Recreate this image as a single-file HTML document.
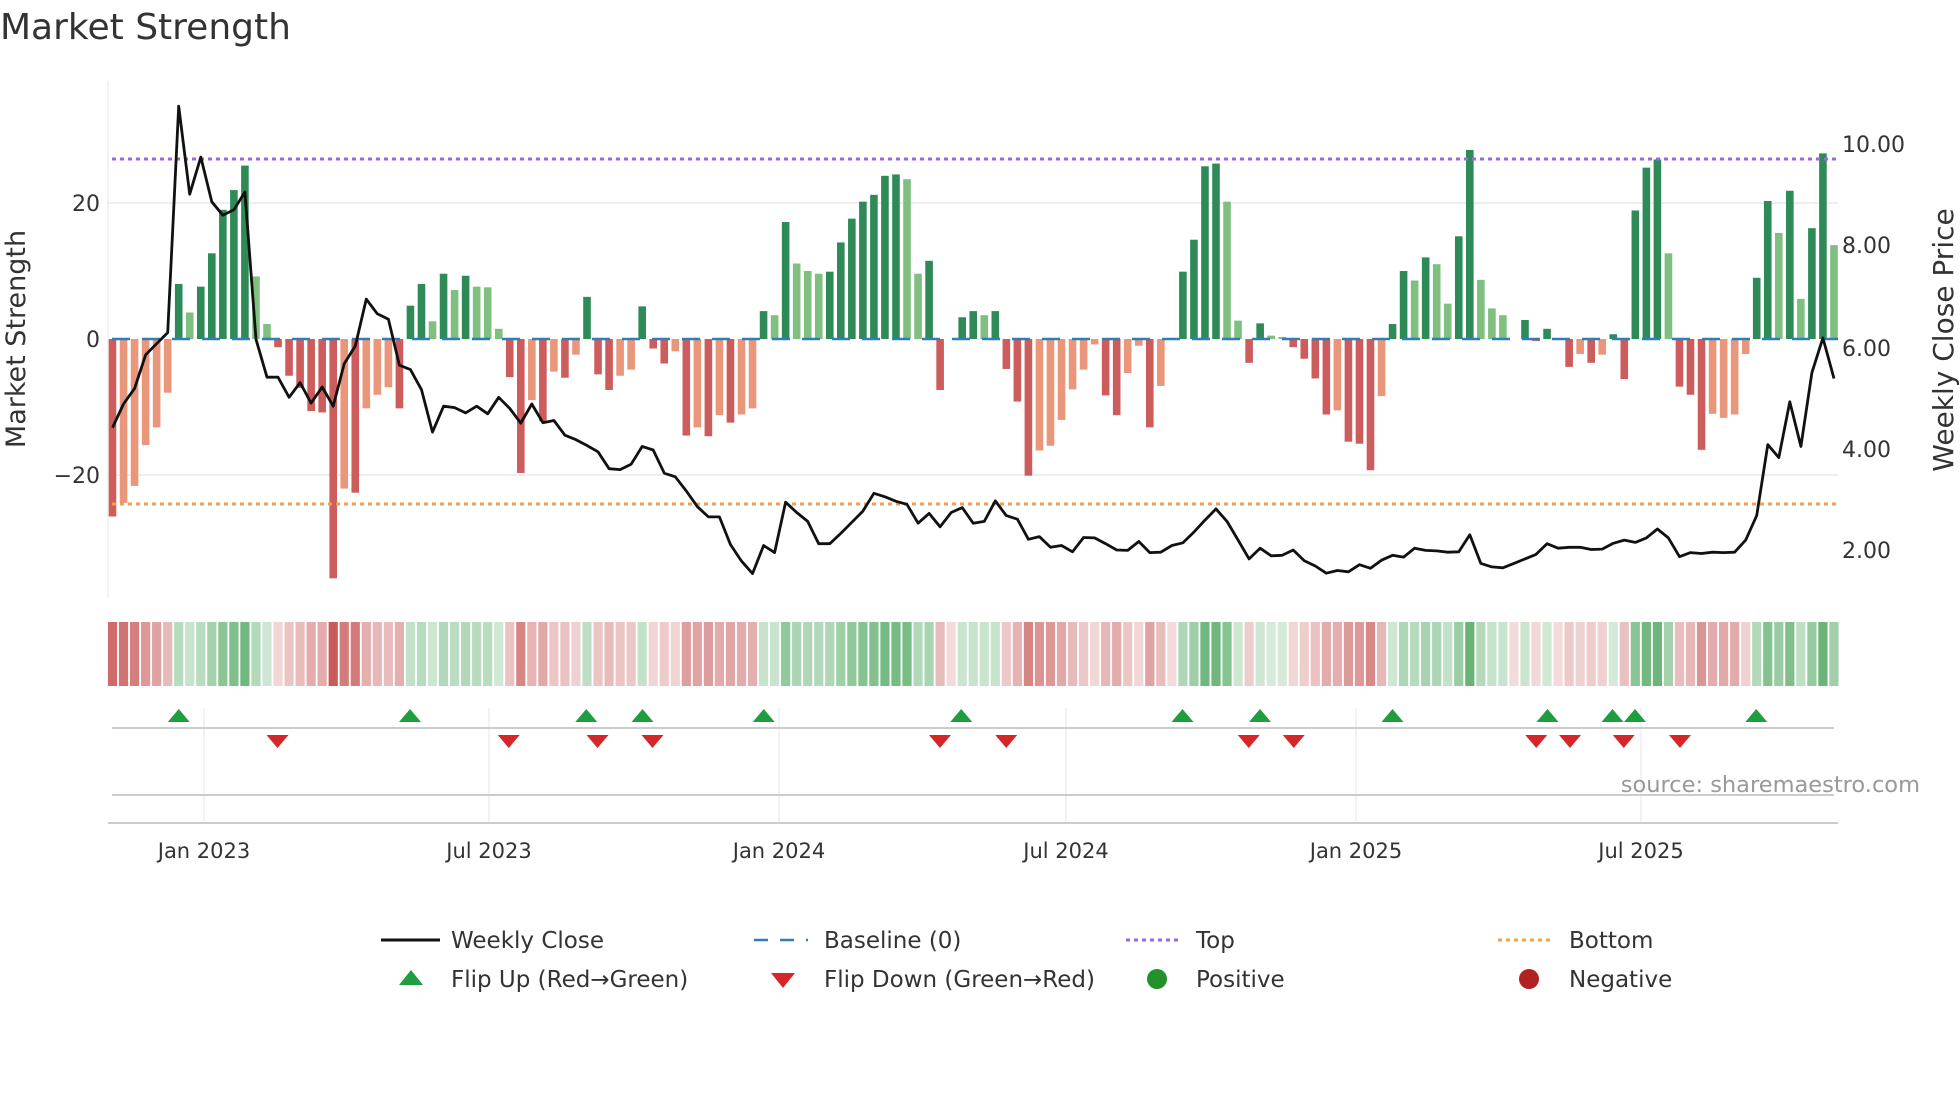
<!DOCTYPE html>
<html><head><meta charset="utf-8">
<style>
html,body{margin:0;padding:0;background:#fff;}
body{width:1960px;height:1102px;overflow:hidden;font-family:"DejaVu Sans","Liberation Sans",sans-serif;}
svg text{font-family:"DejaVu Sans","Liberation Sans",sans-serif;}
</style></head>
<body>
<svg id="s" width="1960" height="1102" viewBox="0 0 1960 1102" xmlns="http://www.w3.org/2000/svg">
<text x="0" y="39" font-size="36" fill="#333">Market Strength</text>
<line x1="108" y1="81" x2="108" y2="598" stroke="#eee" stroke-width="1.5"/>
<line x1="108" y1="203" x2="1838" y2="203" stroke="#eee" stroke-width="2"/>
<line x1="108" y1="475" x2="1838" y2="475" stroke="#eee" stroke-width="2"/>
<g id="bars"></g>
<line x1="112" y1="339" x2="1838" y2="339" stroke="#2c7fb8" stroke-width="2.5" stroke-dasharray="18,12"/>
<line x1="112" y1="159" x2="1838" y2="159" stroke="#a066e0" stroke-width="3" stroke-dasharray="4,4"/>
<line x1="112" y1="504" x2="1838" y2="504" stroke="#f0a050" stroke-width="3" stroke-dasharray="4,4"/>
<polyline id="price" fill="none" stroke="#111" stroke-width="2.8" stroke-linejoin="round"/>
<text x="100" y="211" font-size="22" fill="#333" text-anchor="end">20</text>
<text x="100" y="347" font-size="22" fill="#333" text-anchor="end">0</text>
<text x="100" y="483" font-size="22" fill="#333" text-anchor="end">−20</text>
<text transform="translate(25,339) rotate(-90)" font-size="27" fill="#333" text-anchor="middle">Market Strength</text>
<text x="1842" y="152" font-size="22" fill="#333">10.00</text>
<text x="1842" y="253" font-size="22" fill="#333">8.00</text>
<text x="1842" y="356" font-size="22" fill="#333">6.00</text>
<text x="1842" y="457" font-size="22" fill="#333">4.00</text>
<text x="1842" y="558" font-size="22" fill="#333">2.00</text>
<text transform="translate(1953,340) rotate(-90)" font-size="28" fill="#333" text-anchor="middle">Weekly Close Price</text>
<g id="strip"></g>
<g stroke="#eee" stroke-width="1.5">
<line x1="204" y1="708" x2="204" y2="823"/><line x1="489" y1="708" x2="489" y2="823"/>
<line x1="779" y1="708" x2="779" y2="823"/><line x1="1066" y1="708" x2="1066" y2="823"/>
<line x1="1356" y1="708" x2="1356" y2="823"/><line x1="1641" y1="708" x2="1641" y2="823"/>
</g>
<line x1="112" y1="728" x2="1834" y2="728" stroke="#ccc" stroke-width="2"/>
<line x1="112" y1="795" x2="1834" y2="795" stroke="#ccc" stroke-width="2"/>
<line x1="108" y1="823" x2="1838" y2="823" stroke="#ccc" stroke-width="2"/>
<g id="tri"></g>
<text x="1920" y="792" font-size="22.5" fill="#999" text-anchor="end">source: sharemaestro.com</text>
<g font-size="21" fill="#333" text-anchor="middle">
<text x="204" y="858">Jan 2023</text><text x="489" y="858">Jul 2023</text>
<text x="779" y="858">Jan 2024</text><text x="1066" y="858">Jul 2024</text>
<text x="1356" y="858">Jan 2025</text><text x="1641" y="858">Jul 2025</text>
</g>
<g font-size="23" fill="#333">
<line x1="381" y1="940" x2="440" y2="940" stroke="#111" stroke-width="3"/>
<text x="451" y="948">Weekly Close</text>
<line x1="754" y1="940" x2="808" y2="940" stroke="#2c7fb8" stroke-width="2.5" stroke-dasharray="14,12"/>
<text x="824" y="948">Baseline (0)</text>
<line x1="1126" y1="940" x2="1181" y2="940" stroke="#a066e0" stroke-width="3" stroke-dasharray="4,4"/>
<text x="1196" y="948">Top</text>
<line x1="1498" y1="940" x2="1554" y2="940" stroke="#f0a050" stroke-width="3" stroke-dasharray="4,4"/>
<text x="1569" y="948">Bottom</text>
<polygon points="399,985 423,985 411,970" fill="#1f9e3f"/>
<text x="451" y="987">Flip Up (Red→Green)</text>
<polygon points="771,973 795,973 783,988" fill="#d62728"/>
<text x="824" y="987">Flip Down (Green→Red)</text>
<circle cx="1157" cy="979" r="10" fill="#22912a"/>
<text x="1196" y="987">Positive</text>
<circle cx="1529" cy="979" r="10" fill="#b22222"/>
<text x="1569" y="987">Negative</text>
</g>
</svg>
<script>
var V=[-26.1,-24.1,-21.6,-15.6,-13,-7.9,8.1,3.9,7.7,12.6,19,21.9,25.5,9.2,2.2,-1.2,-5.4,-7.2,-10.6,-10.8,-35.2,-22,-22.6,-10.2,-8.2,-7.1,-10.2,4.9,8.1,2.6,9.6,7.2,9.3,7.7,7.6,1.5,-5.6,-19.7,-9,-12.1,-4.8,-5.7,-2.3,6.2,-5.2,-7.5,-5.4,-4.5,4.8,-1.4,-3.6,-1.8,-14.2,-13,-14.3,-11.2,-12.3,-11.1,-10.2,4.1,3.5,17.2,11.1,10,9.6,9.9,14.2,17.7,20.2,21.2,24,24.2,23.5,9.6,11.5,-7.5,0,3.2,4.1,3.5,4.1,-4.4,-9.2,-20.1,-16.4,-15.7,-11.9,-7.4,-4.5,-0.8,-8.3,-11.2,-5,-1,-13,-6.9,0,9.9,14.6,25.4,25.8,20.2,2.7,-3.5,2.3,0.5,0.3,-1.2,-2.9,-5.8,-11.1,-10.5,-15.1,-15.4,-19.3,-8.4,2.2,10,8.6,12,11,5.2,15.1,27.8,8.7,4.5,3.5,0,2.8,-0.3,1.5,0,-4.1,-2.2,-3.5,-2.3,0.7,-5.9,18.9,25.2,26.4,12.6,-7,-8.2,-16.3,-11,-11.6,-11.1,-2.2,9,20.3,15.6,21.8,5.9,16.3,27.3,13.8];
var LIGHT={7:1,13:1,14:1,29:1,31:1,33:1,34:1,35:1,60:1,62:1,63:1,64:1,72:1,73:1,79:1,101:1,102:1,105:1,106:1,118:1,120:1,121:1,124:1,125:1,126:1,141:1,151:1,153:1,156:1};
var SAL={1:1,2:1,3:1,4:1,5:1,21:1,23:1,24:1,25:1,38:1,40:1,42:1,46:1,47:1,51:1,53:1,55:1,57:1,58:1,84:1,85:1,86:1,87:1,88:1,89:1,92:1,93:1,95:1,111:1,115:1,133:1,135:1,145:1,146:1,147:1,148:1};
var P=[958,905,870,795,770,745,238,435,352,452,482,470,430,760,845,845,890,857,903,867,910,815,775,670,703,715,818,828,873,968,910,913,925,910,927,890,915,948,905,947,942,975,985,998,1012,1050,1052,1040,1000,1008,1060,1068,1100,1135,1158,1158,1220,1257,1285,1222,1238,1125,1148,1168,1218,1218,1195,1170,1145,1105,1113,1123,1130,1172,1150,1180,1148,1137,1172,1168,1122,1155,1163,1208,1202,1226,1222,1236,1204,1205,1218,1232,1233,1213,1238,1237,1222,1216,1192,1165,1140,1168,1210,1252,1228,1245,1244,1232,1256,1268,1284,1278,1281,1265,1273,1255,1244,1248,1228,1233,1234,1237,1236,1198,1262,1270,1272,1262,1252,1242,1218,1228,1226,1226,1231,1230,1217,1210,1215,1205,1185,1205,1247,1238,1240,1237,1238,1237,1210,1155,996,1025,900,1000,835,757,848];
var NS="http://www.w3.org/2000/svg";
function el(t,a,p){var e=document.createElementNS(NS,t);for(var k in a)e.setAttribute(k,a[k]);document.getElementById(p).appendChild(e);return e;}
function X(i){return 112.5+11.035*i;}
function mix(c,t){var w=[255,255,255];return "rgb("+c.map(function(v,j){return Math.round(w[j]+(v-w[j])*t);}).join(",")+")";}
var pts=[];
for(var i=0;i<V.length;i++){
 var v=V[i],x=X(i),y0=339,y1=339-v*6.8;
 var col=v>=0?(LIGHT[i]?"#7fbf7f":"#2e8b57"):(SAL[i]?"#e9967a":"#cd5c5c");
 if(Math.abs(v)>0.05) el("rect",{x:x-3.8,y:Math.min(y0,y1),width:7.6,height:Math.abs(y1-y0),fill:col},"bars");
 var t=Math.min(Math.abs(v)/30,1);
 var sc=v>0?mix([95,175,110],0.25+0.75*t):mix([200,90,90],0.22+0.78*t);
 el("rect",{x:x-4.6,y:622,width:9.2,height:64,fill:sc},"strip");
 pts.push(x.toFixed(1)+","+(P[i]*0.4464).toFixed(1));
}
document.getElementById("price").setAttribute("points",pts.join(" "));
var up=[143,328,469,514,611,769,946,1008,1114,1238,1290,1308,1405],dn=[222,407,478,522,752,805,999,1035,1229,1256,1299,1344];
up.forEach(function(u){var x=u*1.25;el("polygon",{points:(x-11)+",722 "+(x+11)+",722 "+x+",709",fill:"#1f9e3f"},"tri");});
dn.forEach(function(u){var x=u*1.25;el("polygon",{points:(x-11)+",735 "+(x+11)+",735 "+x+",748",fill:"#d62728"},"tri");});
</script>
</body></html>
